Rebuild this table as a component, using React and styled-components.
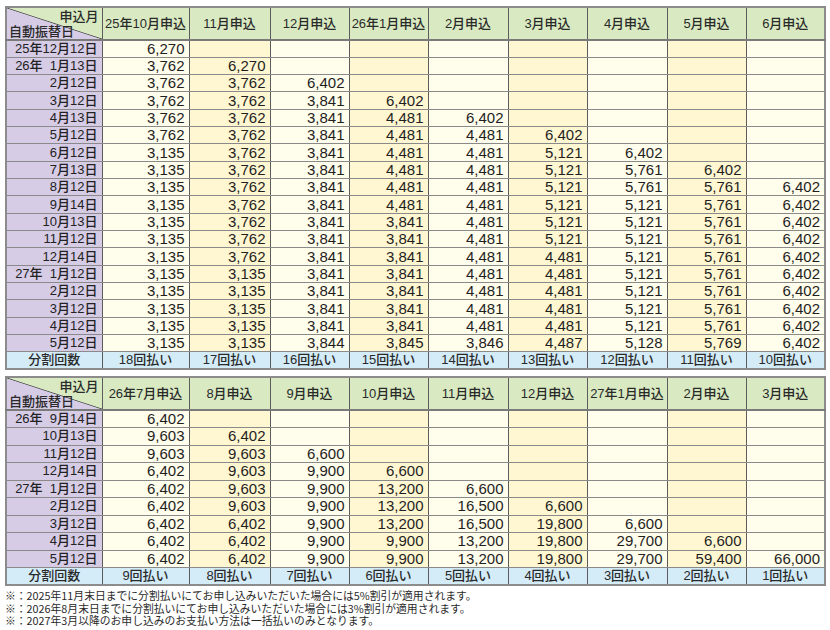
import React from "react";
import styled, { createGlobalStyle } from "styled-components";

const GlobalStyle = createGlobalStyle`
  html, body {
    margin: 0;
    padding: 0;
    background: #ffffff;
  }
  body {
    font-family: "Liberation Sans", "Noto Sans CJK JP", sans-serif;
    color: #222222;
    line-height: 1;
  }
`;

const WIDTHS = [96, 87, 81, 79, 79, 80, 79, 80, 79, 79];

const table1 = {
  heads: ["25年10月申込", "11月申込", "12月申込", "26年1月申込", "2月申込", "3月申込", "4月申込", "5月申込", "6月申込"],
  rows: [
    ["25年12月12日", ["6,270"]],
    ["26年\u00a0\u00a01月13日", ["3,762", "6,270"]],
    ["2月12日", ["3,762", "3,762", "6,402"]],
    ["3月12日", ["3,762", "3,762", "3,841", "6,402"]],
    ["4月13日", ["3,762", "3,762", "3,841", "4,481", "6,402"]],
    ["5月12日", ["3,762", "3,762", "3,841", "4,481", "4,481", "6,402"]],
    ["6月12日", ["3,135", "3,762", "3,841", "4,481", "4,481", "5,121", "6,402"]],
    ["7月13日", ["3,135", "3,762", "3,841", "4,481", "4,481", "5,121", "5,761", "6,402"]],
    ["8月12日", ["3,135", "3,762", "3,841", "4,481", "4,481", "5,121", "5,761", "5,761", "6,402"]],
    ["9月14日", ["3,135", "3,762", "3,841", "4,481", "4,481", "5,121", "5,121", "5,761", "6,402"]],
    ["10月13日", ["3,135", "3,762", "3,841", "3,841", "4,481", "5,121", "5,121", "5,761", "6,402"]],
    ["11月12日", ["3,135", "3,762", "3,841", "3,841", "4,481", "5,121", "5,121", "5,761", "6,402"]],
    ["12月14日", ["3,135", "3,762", "3,841", "3,841", "4,481", "4,481", "5,121", "5,761", "6,402"]],
    ["27年\u00a0\u00a01月12日", ["3,135", "3,135", "3,841", "3,841", "4,481", "4,481", "5,121", "5,761", "6,402"]],
    ["2月12日", ["3,135", "3,135", "3,841", "3,841", "4,481", "4,481", "5,121", "5,761", "6,402"]],
    ["3月12日", ["3,135", "3,135", "3,841", "3,841", "4,481", "4,481", "5,121", "5,761", "6,402"]],
    ["4月12日", ["3,135", "3,135", "3,841", "3,841", "4,481", "4,481", "5,121", "5,761", "6,402"]],
    ["5月12日", ["3,135", "3,135", "3,844", "3,845", "3,846", "4,487", "5,128", "5,769", "6,402"]],
  ],
  counts: [18, 17, 16, 15, 14, 13, 12, 11, 10],
};

const table2 = {
  heads: ["26年7月申込", "8月申込", "9月申込", "10月申込", "11月申込", "12月申込", "27年1月申込", "2月申込", "3月申込"],
  rows: [
    ["26年\u00a0\u00a09月14日", ["6,402"]],
    ["10月13日", ["9,603", "6,402"]],
    ["11月12日", ["9,603", "9,603", "6,600"]],
    ["12月14日", ["6,402", "9,603", "9,900", "6,600"]],
    ["27年\u00a0\u00a01月12日", ["6,402", "9,603", "9,900", "13,200", "6,600"]],
    ["2月12日", ["6,402", "9,603", "9,900", "13,200", "16,500", "6,600"]],
    ["3月12日", ["6,402", "6,402", "9,900", "13,200", "16,500", "19,800", "6,600"]],
    ["4月12日", ["6,402", "6,402", "9,900", "9,900", "13,200", "19,800", "29,700", "6,600"]],
    ["5月12日", ["6,402", "6,402", "9,900", "9,900", "13,200", "19,800", "29,700", "59,400", "66,000"]],
  ],
  counts: [9, 8, 7, 6, 5, 4, 3, 2, 1],
};

const notes = [
  "※：2025年11月末日までに分割払いにてお申し込みいただいた場合には5%割引が適用されます。",
  "※：2026年8月末日までに分割払いにてお申し込みいただいた場合には3%割引が適用されます。",
  "※：2027年3月以降のお申し込みのお支払い方法は一括払いのみとなります。",
];

const Page = styled.div`
  width: 830px;
  height: 630px;
  box-sizing: border-box;
  padding: 6px 6px 0 5px;
  display: flex;
  flex-direction: column;
  gap: 6px;
`;

const Sheet = styled.table`
  width: 819px;
  table-layout: fixed;
  border-collapse: collapse;
  border: 2px solid #8c8c8c;

  th,
  td {
    line-height: 14px;
    height: ${(p) => p.$rowH}px;
    box-sizing: border-box;
  }

  thead th {
    height: 33px;
  }
`;

const HeadCell = styled.th`
  padding: 0;
  background: #d9eac2;
  border-left: 1px solid #5c5c5c;
  border-bottom: 2px solid #7a7a7a;
  font-size: 13px;
  font-weight: 500;
  text-align: center;
  color: #2a2a2a;
  white-space: nowrap;
`;

const CornerCell = styled.th`
  padding: 0;
  border-bottom: 2px solid #7a7a7a;
  background: linear-gradient(
    to top right,
    #d6cce6 calc(50% - 0.8px),
    #555555 50%,
    #d9eac2 calc(50% + 0.8px)
  );
`;

const CornerInner = styled.div`
  height: 31px;
  display: flex;
  flex-direction: column;
  justify-content: space-between;
  padding: 1px 3px 0 2px;
  box-sizing: border-box;
  font-size: 13px;
  font-weight: 500;
  line-height: 15px;
  color: #2a2a2a;
`;

const CornerTop = styled.span`
  align-self: flex-end;
`;

const CornerBottom = styled.span`
  align-self: flex-start;
`;

const DateCell = styled.th`
  padding: 0 4px 0 0;
  background: #d6cce6;
  border-bottom: 1px solid #8a8a8a;
  font-size: 13px;
  font-weight: 500;
  text-align: right;
  white-space: nowrap;
  color: #222222;
`;

const AmountCell = styled.td`
  padding: 0 4px 0 0;
  background: ${(p) => (p.$alt ? "#fff7d1" : "#fffdeb")};
  border-left: 1px solid #5c5c5c;
  border-bottom: 1px solid #8a8a8a;
  font-size: 15px;
  text-align: right;
  white-space: nowrap;
  color: #1f1f1f;
`;

const CountLabel = styled.th`
  padding: 0;
  background: #d3ecf8;
  font-size: 13px;
  font-weight: 500;
  text-align: center;
  color: #2a2a2a;
`;

const CountCell = styled.td`
  padding: 0;
  background: #d3ecf8;
  border-left: 1px solid #5c5c5c;
  font-size: 13px;
  font-weight: 500;
  text-align: center;
  color: #2a2a2a;
`;

const Notes = styled.div`
  display: flex;
  flex-direction: column;
  margin-top: -3px;
  font-family: "Noto Sans CJK JP", sans-serif;
  font-size: 10.8px;
  line-height: 12.5px;
  color: #2a2a2a;
  white-space: nowrap;
`;

const Schedule = ({ data, rowH }) => (
  <Sheet $rowH={rowH}>
    <colgroup>
      {WIDTHS.map((w, i) => (
        <col key={i} style={{ width: w }} />
      ))}
    </colgroup>
    <thead>
      <tr>
        <CornerCell>
          <CornerInner>
            <CornerTop>申込月</CornerTop>
            <CornerBottom>自動振替日</CornerBottom>
          </CornerInner>
        </CornerCell>
        {data.heads.map((h) => (
          <HeadCell key={h}>{h}</HeadCell>
        ))}
      </tr>
    </thead>
    <tbody>
      {data.rows.map(([date, values], r) => (
        <tr key={r}>
          <DateCell>{date}</DateCell>
          {data.heads.map((_, c) => (
            <AmountCell key={c} $alt={c % 2 === 1}>
              {values[c] || ""}
            </AmountCell>
          ))}
        </tr>
      ))}
      <tr>
        <CountLabel>分割回数</CountLabel>
        {data.counts.map((n) => (
          <CountCell key={n}>{n}回払い</CountCell>
        ))}
      </tr>
    </tbody>
  </Sheet>
);

export default function App() {
  return (
    <>
      <GlobalStyle />
      <Page>
        <Schedule data={table1} rowH={17.33} />
        <Schedule data={table2} rowH={17.5} />
        <Notes>
          {notes.map((n) => (
            <span key={n}>{n}</span>
          ))}
        </Notes>
      </Page>
    </>
  );
}
